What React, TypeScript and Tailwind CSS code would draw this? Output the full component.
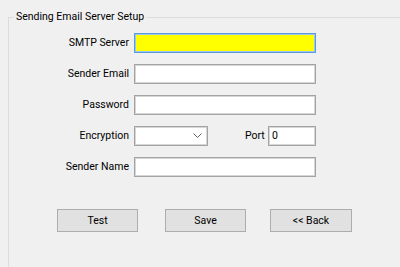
const font = { fontFamily: 'Roboto, "Liberation Sans", Arial, sans-serif' };

const Field = ({ label, children }: { label: string; children: React.ReactNode }) => (
  <div className="flex items-center h-[20px]">
    <span className="w-[121px] text-right text-[10.5px] text-black pr-[1px]">{label}</span>
    <div className="ml-[4px] flex items-center">{children}</div>
  </div>
);

const TextBox = ({ w, value, focused }: { w: string; value?: string; focused?: boolean }) => (
  <div
    className={
      focused
        ? `${w} h-[20px] bg-[#ffff00] border border-[#5b9be0] shadow-[inset_0_0_0_1px_#9cc6f0]`
        : `${w} h-[20px] bg-white border border-[#a3a3a3] shadow-[inset_0_0_0_1px_#d6d6d6] text-[10.5px] text-black pl-[3px] flex items-center`
    }
  >
    {value}
  </div>
);

const Button = ({ label, w }: { label: string; w: string }) => (
  <div
    className={`${w} h-[23px] bg-[#e1e1e1] border border-[#adadad] flex items-center justify-center text-[10.5px] text-black`}
  >
    {label}
  </div>
);

const App = () => {
  return (
    <div className="w-[400px] h-[267px] overflow-hidden bg-[#f0f0f0] pl-[8px] pt-[9px]" style={font}>
      <fieldset className="w-[430px] h-[300px] border-l border-t border-[#dcdcdc] m-0 p-0">
        <legend className="ml-[5px] px-[2px] text-[10.5px] text-black leading-[16px]">
          Sending Email Server Setup
        </legend>
        <div className="flex flex-col gap-[11px] pt-[8px]">
          <Field label="SMTP Server">
            <TextBox w="w-[182px]" focused />
          </Field>
          <Field label="Sender Email">
            <TextBox w="w-[182px]" />
          </Field>
          <Field label="Password">
            <TextBox w="w-[182px]" />
          </Field>
          <Field label="Encryption">
            {/* combo box */}
            <div className="w-[74px] h-[20px] bg-white border border-[#a3a3a3] shadow-[inset_0_0_0_1px_#d6d6d6] flex items-center justify-end pr-[5px]">
              <svg width="9" height="6" viewBox="0 0 9 6">
                <path d="M0.5 0.5 L4.5 4.5 L8.5 0.5" fill="none" stroke="#606060" strokeWidth="1" />
              </svg>
            </div>
            <span className="ml-[37px] w-[21px] text-[10.5px] text-black">Port</span>
            <div className="ml-[2px]">
              <TextBox w="w-[48px]" value="0" />
            </div>
          </Field>
          <Field label="Sender Name">
            <TextBox w="w-[182px]" />
          </Field>
        </div>
        <div className="flex mt-[32px] pl-[48px]">
          <Button label="Test" w="w-[81px]" />
          <div className="ml-[27px]">
            <Button label="Save" w="w-[81px]" />
          </div>
          <div className="ml-[24px]">
            <Button label="<< Back" w="w-[82px]" />
          </div>
        </div>
      </fieldset>
    </div>
  );
};

export default App;
